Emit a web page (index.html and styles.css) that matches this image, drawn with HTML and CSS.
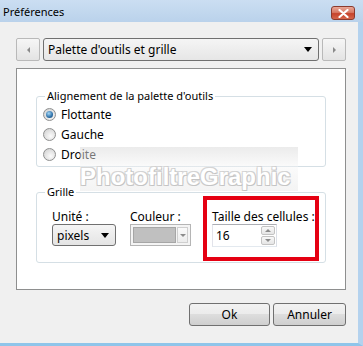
FILE: index.html
```html
<!DOCTYPE html>
<html lang="fr">
<head>
    <meta charset="UTF-8">
    <title>Préférences</title>
    <link rel="stylesheet" href="styles.css">
</head>
<body>
    <div class="window">
        <div class="titlebar">
            <span class="title">Préférences</span>
            <span class="close">
                <svg width="11" height="9" viewBox="0 0 11 9"><path d="M1.5 1 L9.5 8 M9.5 1 L1.5 8" stroke="#fff" stroke-width="2.2" stroke-linecap="round"/></svg>
            </span>
        </div>

        <div class="body">
            <div class="nav">
                <div class="nav-btn"><span class="tri-left"></span></div>
                <div class="combo">
                    <span>Palette d'outils et grille</span>
                    <span class="arrow"></span>
                </div>
                <div class="nav-btn"><span class="tri-right"></span></div>
            </div>

            <div class="panel">
                <fieldset class="group align">
                    <legend>Alignement de la palette d'outils</legend>
                    <div class="radio-row"><span class="radio checked"></span>Flottante</div>
                    <div class="radio-row"><span class="radio"></span>Gauche</div>
                    <div class="radio-row"><span class="radio"></span>Droite</div>
                </fieldset>

                <fieldset class="group grille">
                    <legend>Grille</legend>
                    <div class="fields">
                        <div class="field">
                            <div class="field-label">Unité :</div>
                            <div class="select">
                                <span>pixels</span>
                                <span class="arrow"></span>
                            </div>
                        </div>
                        <div class="field">
                            <div class="field-label">Couleur :</div>
                            <div class="color-pick">
                                <span class="swatch"></span>
                                <span class="swatch-btn"><span class="tri-down"></span></span>
                            </div>
                        </div>
                        <div class="field">
                            <div class="field-label">Taille des cellules :</div>
                            <div class="spin">
                                <span class="spin-value">16</span>
                                <span class="spin-btns">
                                    <span class="spin-btn"><span class="tri-up"></span></span>
                                    <span class="spin-btn"><span class="tri-down"></span></span>
                                </span>
                            </div>
                        </div>
                    </div>
                </fieldset>

                <div class="watermark">PhotofiltreGraphic</div>
            </div>

            <div class="actions">
                <button class="btn ok">Ok</button>
                <button class="btn cancel">Annuler</button>
            </div>
        </div>

        <div class="highlight"></div>
    </div>
</body>
</html>
```

FILE: styles.css
```css
body {
    margin: 0;
    font-family: "Noto Sans", sans-serif;
    font-size: 11px;
    color: #000;
    background: #151b22;
}
.window {
    position: relative;
    width: 363px;
    height: 346px;
    display: flex;
    flex-direction: column;
    background: #151b22;
}
.titlebar {
    height: 22px;
    flex: none;
    display: flex;
    justify-content: space-between;
    align-items: flex-start;
    padding: 0 8px 0 3px;
    background: linear-gradient(#cbdef2, #bad2eb);
}
.title {
    margin-top: 4px;
    line-height: 16px;
}
.close {
    margin-top: 6px;
    width: 24px;
    height: 14px;
    box-sizing: border-box;
    border: 1px solid #8b3a2e;
    border-radius: 3px;
    background: linear-gradient(#e9a797, #d87a66 45%, #c6432c 55%, #d5664c);
    display: flex;
    justify-content: center;
    align-items: center;
}
.body {
    flex: 1;
    background: #f0f0f0;
    border-right: 5px solid #b4d2ee;
    border-bottom: 3px solid #8fc5ea;
    padding: 16px 12px 0 16px;
}

/* top navigation */
.nav {
    display: flex;
    gap: 3px;
    height: 23px;
}
.nav-btn {
    width: 24px;
    box-sizing: border-box;
    border: 1px solid #b9b9b9;
    border-radius: 2px;
    background: linear-gradient(#f6f6f6, #e3e3e3);
    display: flex;
    justify-content: center;
    align-items: center;
}
.tri-left {
    border-top: 3px solid transparent;
    border-bottom: 3px solid transparent;
    border-right: 3px solid #8a8a8a;
}
.tri-right {
    border-top: 3px solid transparent;
    border-bottom: 3px solid transparent;
    border-left: 3px solid #8a8a8a;
}
.combo {
    flex: 1;
    box-sizing: border-box;
    border: 1px solid #707070;
    border-radius: 3px;
    background: linear-gradient(#f5f5f5, #e6e6e6);
    display: flex;
    justify-content: space-between;
    align-items: center;
    padding: 0 6px 0 4px;
    font-size: 12px;
}
.arrow {
    border-left: 4px solid transparent;
    border-right: 4px solid transparent;
    border-top: 5px solid #000;
}

/* white panel */
.panel {
    position: relative;
    margin-top: 7px;
    height: 222px;
    box-sizing: border-box;
    background: #fff;
    border: 1px solid #8e8f8f;
}
.group {
    margin: 19px 19px 0;
    border: 1px solid #d5dfe5;
    border-radius: 3px;
    min-width: 0;
}
.group legend {
    line-height: 16px;
    padding: 0 2px;
}
.align {
    padding: 0 0 2px 6px;
}
.align legend {
    margin-left: 2px;
}
.radio-row {
    height: 20px;
    display: flex;
    align-items: center;
    gap: 5px;
    font-size: 12px;
}
.radio {
    width: 13px;
    height: 13px;
    box-sizing: border-box;
    border-radius: 50%;
    border: 1px solid #8e8f8f;
    background: radial-gradient(circle at 60% 65%, #fbfbfb, #d3d3d3 85%);
    display: flex;
    justify-content: center;
    align-items: center;
}
.radio.checked::after {
    content: "";
    width: 7px;
    height: 7px;
    border-radius: 50%;
    background: radial-gradient(circle at 40% 35%, #a6d8f7, #2d70a8 60%, #173f66);
}

.grille {
    margin-top: 17px;
    padding: 9px 0 15px 15px;
}
.grille legend {
    margin-left: -7px;
}
.fields {
    display: grid;
    grid-template-columns: 78px 82px auto;
}
.field-label {
    line-height: 15px;
    font-size: 12px;
}
.select {
    width: 64px;
    height: 22px;
    box-sizing: border-box;
    border: 1px solid #707070;
    border-radius: 3px;
    background: linear-gradient(#f5f5f5, #e4e4e4);
    display: flex;
    justify-content: space-between;
    align-items: center;
    padding: 0 6px 0 4px;
    font-size: 12px;
}
.color-pick {
    width: 61px;
    height: 22px;
    box-sizing: border-box;
    border: 1px solid #b5b5b5;
    padding: 2px;
    display: flex;
    gap: 1px;
    background: #f4f4f4;
}
.swatch {
    flex: 1;
    background: #c0c0c0;
    border: 1px solid #a6a6a6;
}
.swatch-btn {
    width: 11px;
    box-sizing: border-box;
    border: 1px solid #cfcfcf;
    background: linear-gradient(#fafafa, #ececec);
    display: flex;
    justify-content: center;
    align-items: center;
}
.tri-down {
    border-left: 3px solid transparent;
    border-right: 3px solid transparent;
    border-top: 3px solid #8c8c8c;
}
.tri-up {
    border-left: 3px solid transparent;
    border-right: 3px solid transparent;
    border-bottom: 3px solid #8c8c8c;
}
.spin {
    width: 65px;
    height: 23px;
    box-sizing: border-box;
    border: 1px solid #abadb3;
    border-color: #abadb3 #dbdfe6 #e3e9ef #e2e3ea;
    background: #fff;
    display: flex;
    justify-content: space-between;
    padding: 1px 1px 1px 3px;
}
.spin-value {
    font-size: 12px;
    line-height: 19px;
}
.spin-btns {
    width: 14px;
    display: flex;
    flex-direction: column;
    gap: 1px;
}
.spin-btn {
    flex: 1;
    border: 1px solid #c3c3c3;
    border-radius: 2px;
    background: linear-gradient(#f8f8f8, #e6e6e6);
    display: flex;
    justify-content: center;
    align-items: center;
}

/* site watermark over the panel */
.watermark {
    position: absolute;
    left: 63px;
    top: 78px;
    width: 218px;
    height: 44px;
    box-sizing: border-box;
    padding: 22px 0 0 0;
    background: linear-gradient(rgba(222, 222, 222, 0.6), rgba(245, 245, 245, 0.4) 45%, rgba(232, 232, 232, 0.5));
    font-family: "Liberation Sans", Arial, sans-serif;
    font-weight: bold;
    font-size: 24px;
    line-height: 16px;
    color: #fff;
    text-shadow: 1px 1px 0 #c4c4c4, -1px -1px 0 #d6d6d6, 1px -1px 0 #d0d0d0, -1px 1px 0 #cccccc;
}

/* bottom buttons */
.actions {
    display: flex;
    justify-content: flex-end;
    gap: 3px;
    margin-top: 13px;
}
.btn {
    height: 23px;
    box-sizing: border-box;
    border: 1px solid #707070;
    border-radius: 3px;
    background: linear-gradient(#f2f2f2 0%, #ebebeb 50%, #dddddd 50%, #cfcfcf 100%);
    font-family: "Noto Sans", sans-serif;
    font-size: 12px;
    color: #000;
    padding: 0;
}
.ok {
    width: 81px;
}
.cancel {
    width: 73px;
}

.highlight {
    position: absolute;
    left: 203px;
    top: 196px;
    width: 116px;
    height: 65px;
    box-sizing: border-box;
    border: 4px solid #e50012;
}
```
